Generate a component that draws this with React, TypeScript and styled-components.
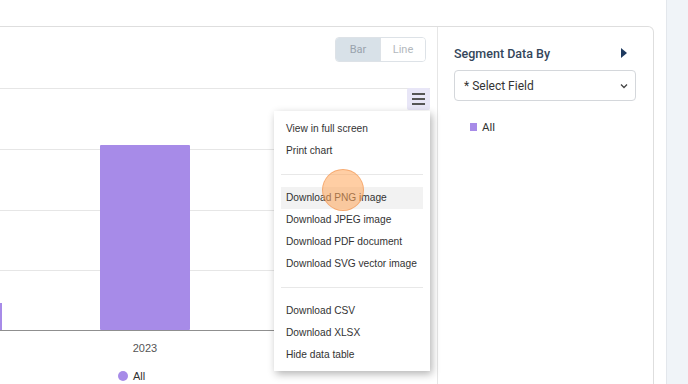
import styled, { createGlobalStyle } from 'styled-components';

const GlobalStyle = createGlobalStyle`
  html, body {
    margin: 0;
    padding: 0;
    background: #fff;
    font-family: Roboto, "Liberation Sans", sans-serif;
  }
`;

const Page = styled.div`
  display: flex;
  width: 688px;
  height: 384px;
  overflow: hidden;
`;

const Main = styled.div`
  flex: 1;
  padding-top: 26px;
  padding-right: 12px;
`;

const SideStrip = styled.div`
  width: 21px;
  background: #f0f4f8;
  border-left: 1px solid #e3e7ec;
`;

const Card = styled.div`
  display: flex;
  height: 400px;
  border: 1px solid #dedede;
  border-left: none;
  border-radius: 0 6px 0 0;
  box-sizing: border-box;
`;

const ChartColumn = styled.div`
  width: 437px;
  border-right: 1px solid #e6e6e6;
  display: flex;
  flex-direction: column;
`;

const Toolbar = styled.div`
  height: 61px;
  box-sizing: border-box;
  padding: 10px 11px 0 0;
  display: flex;
  justify-content: flex-end;
  align-items: flex-start;
`;

const Toggle = styled.div`
  display: flex;
  border: 1px solid #dde2e7;
  border-radius: 4px;
  overflow: hidden;
`;

const ToggleButton = styled.div<{ $active?: boolean }>`
  width: 44px;
  height: 23px;
  display: flex;
  align-items: center;
  justify-content: center;
  font-size: 11px;
  color: ${p => (p.$active ? '#98a3ad' : '#b3b8bd')};
  background: ${p => (p.$active ? '#d8e1e8' : '#fff')};
  border-right: ${p => (p.$active ? '1px solid #dde2e7' : 'none')};
`;

const ChartArea = styled.div`
  position: relative;
  flex: 1;
`;

const ChartSvg = styled.svg`
  display: block;
  font-family: "Liberation Sans", Arial, sans-serif;
`;

const MenuButton = styled.div`
  position: absolute;
  top: 0;
  right: 7px;
  width: 23px;
  height: 22px;
  background: #e8e6f7;
  border-radius: 2px;
  display: flex;
  flex-direction: column;
  align-items: center;
  justify-content: center;
  gap: 3px;
`;

const MenuBar = styled.span`
  width: 13px;
  height: 2px;
  background: #555;
`;

const Menu = styled.div`
  position: absolute;
  top: 23px;
  left: 274px;
  width: 156px;
  box-sizing: border-box;
  padding: 7px 7px 5px;
  background: #fff;
  box-shadow: 2px 3px 8px rgba(0, 0, 0, 0.3);
  font-family: "Liberation Sans", Arial, sans-serif;
`;

const MenuItem = styled.div<{ $hover?: boolean }>`
  height: 22px;
  line-height: 22px;
  padding-left: 5px;
  font-size: 10.2px;
  color: #333;
  white-space: nowrap;
  background: ${p => (p.$hover ? '#f2f2f2' : 'transparent')};
`;

const MenuSeparator = styled.div`
  height: 1px;
  background: #e8e8e8;
  margin: 12px 0 12px;
`;

const Cursor = styled.div`
  position: absolute;
  left: 322px;
  top: 81px;
  width: 40px;
  height: 40px;
  border-radius: 50%;
  background: rgba(255, 165, 90, 0.55);
  border: 1px solid rgba(238, 140, 70, 0.55);
`;

const SidePanel = styled.div`
  flex: 1;
  padding: 16px 17px 0 16px;
`;

const PanelHeader = styled.div`
  display: flex;
  justify-content: space-between;
  align-items: center;
  padding-right: 9px;
  height: 20px;
`;

const PanelTitle = styled.div`
  font-size: 12.5px;
  font-weight: 500;
  color: #34465a;
`;

const PlayIcon = styled.span`
  width: 0;
  height: 0;
  border-top: 5px solid transparent;
  border-bottom: 5px solid transparent;
  border-left: 6px solid #1e3a5f;
`;

const Select = styled.div`
  margin-top: 7px;
  height: 31px;
  box-sizing: border-box;
  border: 1px solid #d4d7db;
  border-radius: 4px;
  display: flex;
  align-items: center;
  justify-content: space-between;
  padding: 0 6px 0 9px;
  font-size: 12px;
  font-weight: 400;
  color: #333;
`;

const LegendRow = styled.div`
  margin: 19px 0 0 16px;
  display: flex;
  align-items: center;
  gap: 5px;
  font-size: 11.5px;
  color: #333;
`;

const LegendSwatch = styled.span`
  width: 7px;
  height: 8px;
  background: #a78be8;
`;

const gridLines = [0, 61, 122, 182];

export default function App() {
  return (
    <Page>
      <GlobalStyle />
      <Main>
        <Card>
          <ChartColumn>
            <Toolbar>
              <Toggle>
                <ToggleButton $active>Bar</ToggleButton>
                <ToggleButton>Line</ToggleButton>
              </Toggle>
            </Toolbar>
            <ChartArea>
              <ChartSvg width="436" height="300">
                {gridLines.map(y => (
                  <line key={y} x1="0" x2="430" y1={y + 0.5} y2={y + 0.5} stroke="#e6e6e6" />
                ))}
                <rect x="-10" y="215" width="12" height="27" fill="#a78be8" />
                <rect x="100" y="57" width="90" height="185" rx="1" fill="#a78be8" />
                <line x1="0" x2="430" y1="242.5" y2="242.5" stroke="#8f8f8f" />
                <text x="145" y="264" textAnchor="middle" fontSize="11" fill="#555">2023</text>
                <circle cx="123" cy="288" r="5" fill="#a78be8" />
                <text x="133" y="292" fontSize="11" fill="#333">All</text>
              </ChartSvg>
              <MenuButton>
                <MenuBar />
                <MenuBar />
                <MenuBar />
              </MenuButton>
              <Menu>
                <MenuItem>View in full screen</MenuItem>
                <MenuItem>Print chart</MenuItem>
                <MenuSeparator />
                <MenuItem $hover>Download PNG image</MenuItem>
                <MenuItem>Download JPEG image</MenuItem>
                <MenuItem>Download PDF document</MenuItem>
                <MenuItem>Download SVG vector image</MenuItem>
                <MenuSeparator />
                <MenuItem>Download CSV</MenuItem>
                <MenuItem>Download XLSX</MenuItem>
                <MenuItem>Hide data table</MenuItem>
              </Menu>
              <Cursor />
            </ChartArea>
          </ChartColumn>
          <SidePanel>
            <PanelHeader>
              <PanelTitle>Segment Data By</PanelTitle>
              <PlayIcon />
            </PanelHeader>
            <Select>
              <span>* Select Field</span>
              <svg width="10" height="10" viewBox="0 0 10 10">
                <path d="M2 3.5 L5 6.5 L8 3.5" fill="none" stroke="#444" strokeWidth="1.3" />
              </svg>
            </Select>
            <LegendRow>
              <LegendSwatch />
              All
            </LegendRow>
          </SidePanel>
        </Card>
      </Main>
      <SideStrip />
    </Page>
  );
}
